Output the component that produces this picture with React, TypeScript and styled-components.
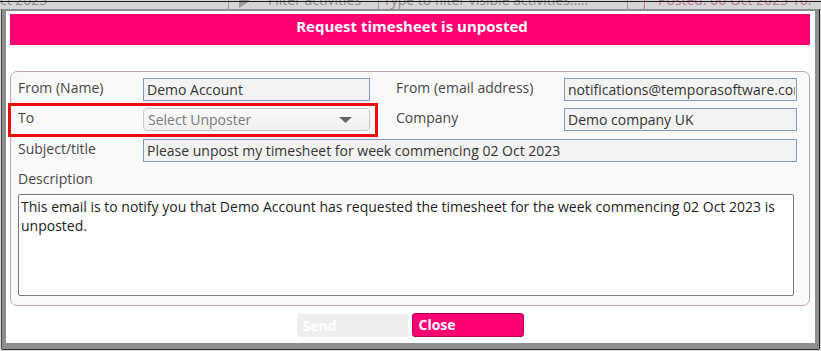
import React from "react";
import styled, { createGlobalStyle } from "styled-components";

const Global = createGlobalStyle`
  html, body { margin: 0; padding: 0; }
  body {
    width: 821px;
    height: 351px;
    overflow: hidden;
    background: #d5d5d5;
    font-family: "Open Sans", "DejaVu Sans", sans-serif;
  }
  * { box-sizing: border-box; }
`;

const PINK = "#ff0072";

const Page = styled.div`
  position: relative;
  width: 821px;
  height: 351px;
  background: #d5d5d5;
  overflow: hidden;
`;

const TopStrip = styled.div`
  position: relative;
  display: flex;
  height: 9px;
  overflow: hidden;
  &::after {
    content: "";
    position: absolute;
    left: 0;
    right: 0;
    top: 1px;
    height: 1px;
    background: #1a1a1a;
  }
`;

const StripCell = styled.div<{ $w: number; $pl: number; $line?: string }>`
  flex: 0 0 ${(p) => p.$w}px;
  display: flex;
  align-items: flex-start;
  gap: 18px;
  padding-left: ${(p) => p.$pl}px;
  border-right: 1px solid ${(p) => p.$line || "#9a9a9a"};
`;

const StripText = styled.span<{ $c?: string }>`
  margin-top: -10px;
  font-size: 14px;
  line-height: 19px;
  color: ${(p) => p.$c || "#8a8a8a"};
  white-space: nowrap;
`;

const StripArrow = styled.span`
  margin-top: -6px;
  width: 0;
  height: 0;
  border-top: 7px solid transparent;
  border-bottom: 7px solid transparent;
  border-left: 11px solid #9a9a9a;
`;

const Dialog = styled.div`
  position: absolute;
  left: 2px;
  top: 9px;
  width: 817px;
  height: 340px;
  background: #ffffff;
  border: 4px solid #8e8e8e;
  border-top-width: 2px;
  border-bottom-width: 6px;
  box-shadow: -1px 0 0 #4a4a4a, 1px 0 0 #1f1f1f, 0 1px 0 #333;
  padding: 3px 5px 0 4px;
  display: flex;
  flex-direction: column;
`;

const TitleBar = styled.div`
  height: 31px;
  background: ${PINK};
  color: #ffffff;
  font-weight: 700;
  font-size: 15px;
  line-height: 22px;
  padding-top: 1px;
  padding-left: 4px;
  text-align: center;
`;

const FieldSet = styled.div`
  position: relative;
  margin-top: 26px;
  height: 235px;
  border: 1px solid #c9a3a3;
  border-radius: 7px;
  background: #f9f9f9;
  padding: 6px 12px 9px 7px;
`;

const Grid = styled.div`
  display: grid;
  grid-template-columns: 125px 227px 26px 168px 233px;
  grid-template-rows: 23px 24px 23px 20px;
  row-gap: 7px;
  align-items: start;
`;

const Label = styled.div<{ $col: number; $row: number }>`
  grid-column: ${(p) => p.$col};
  grid-row: ${(p) => p.$row};
  font-size: 14px;
  line-height: 20px;
  color: #474747;
  white-space: nowrap;
`;

const TextInput = styled.div<{ $col: string; $row: number }>`
  grid-column: ${(p) => p.$col};
  grid-row: ${(p) => p.$row};
  height: 23px;
  border: 1px solid #7f9dbb;
  background: #f3f3f3;
  padding: 0 1px 0 3px;
  font-size: 14px;
  line-height: 21px;
  color: #333333;
`;

const InputValue = styled.span`
  display: block;
  white-space: nowrap;
  overflow: hidden;
`;

const SelectBox = styled.div`
  grid-column: 2;
  grid-row: 2;
  height: 23px;
  border: 1px solid #c9c9c9;
  border-radius: 4px;
  background: linear-gradient(#fbfbfb, #efefef);
  padding: 0 17px 0 4px;
  display: flex;
  align-items: center;
  justify-content: space-between;
  font-size: 14px;
  line-height: 21px;
  color: #7a7a7a;
`;

const Highlight = styled.div`
  position: absolute;
  left: -3px;
  top: 31px;
  width: 370px;
  height: 34px;
  border: 3px solid #ee0b0b;
  pointer-events: none;
`;

const TextArea = styled.div`
  margin-top: 5px;
  width: 776px;
  height: 102px;
  border: 1px solid #7a7a7a;
  border-radius: 2px;
  background: #ffffff;
  padding: 2px 2px;
  font-size: 14px;
  color: #1c1c1c;
`;

const Buttons = styled.div`
  margin-top: 7px;
  display: flex;
  justify-content: center;
  align-items: center;
  gap: 4px;
`;

const Button = styled.button<{ $primary?: boolean }>`
  width: ${(p) => (p.$primary ? 112 : 111)}px;
  height: ${(p) => (p.$primary ? 24 : 23)}px;
  margin-top: ${(p) => (p.$primary ? 0 : 1)}px;
  border: ${(p) => (p.$primary ? "1px solid #b3005a" : "none")};
  border-radius: 3px;
  background: ${(p) => (p.$primary ? PINK : "#eeeeee")};
  color: #ffffff;
  font-family: "Open Sans", sans-serif;
  font-weight: 700;
  font-size: 14px;
  line-height: 20px;
  text-align: left;
  padding: 0 6px;
`;

export default function App() {
  return (
    <>
      <Global />
      <Page>
        <TopStrip>
          <StripCell $w={229} $pl={0}>
            <StripText>ct 2023</StripText>
          </StripCell>
          <StripCell $w={150} $pl={10}>
            <StripArrow />
            <StripText>Filter activities</StripText>
          </StripCell>
          <StripCell $w={249} $pl={4}>
            <StripText>Type to filter visible activities.....</StripText>
          </StripCell>
          <StripCell $w={17} $pl={0} $line="#c06a92">
            <span />
          </StripCell>
          <StripCell $w={180} $pl={13} $line="transparent">
            <StripText $c="#b57a98">Posted: 06 Oct 2023 16:</StripText>
          </StripCell>
        </TopStrip>
        <Dialog>
          <TitleBar>Request timesheet is unposted</TitleBar>
          <FieldSet>
            <Grid>
              <Label $col={1} $row={1}>From (Name)</Label>
              <TextInput $col="2" $row={1}>
                <InputValue>Demo Account</InputValue>
              </TextInput>
              <Label $col={4} $row={1}>From (email address)</Label>
              <TextInput $col="5" $row={1}>
                <InputValue>notifications@temporasoftware.com</InputValue>
              </TextInput>

              <Label $col={1} $row={2}>To</Label>
              <SelectBox>
                <span>Select Unposter</span>
                <svg width="13" height="6" viewBox="0 0 13 6">
                  <polygon points="0,0 13,0 6.5,6" fill="#666666" />
                </svg>
              </SelectBox>
              <Label $col={4} $row={2}>Company</Label>
              <TextInput $col="5" $row={2}>
                <InputValue>Demo company UK</InputValue>
              </TextInput>

              <Label $col={1} $row={3}>Subject/title</Label>
              <TextInput $col="2 / 6" $row={3}>
                <InputValue>Please unpost my timesheet for week commencing 02 Oct 2023</InputValue>
              </TextInput>

              <Label $col={1} $row={4}>Description</Label>
            </Grid>
            <TextArea>
              This email is to notify you that Demo Account has requested the timesheet for the
              week commencing 02 Oct 2023 is unposted.
            </TextArea>
            <Highlight />
          </FieldSet>
          <Buttons>
            <Button>Send</Button>
            <Button $primary>Close</Button>
          </Buttons>
        </Dialog>
      </Page>
    </>
  );
}
